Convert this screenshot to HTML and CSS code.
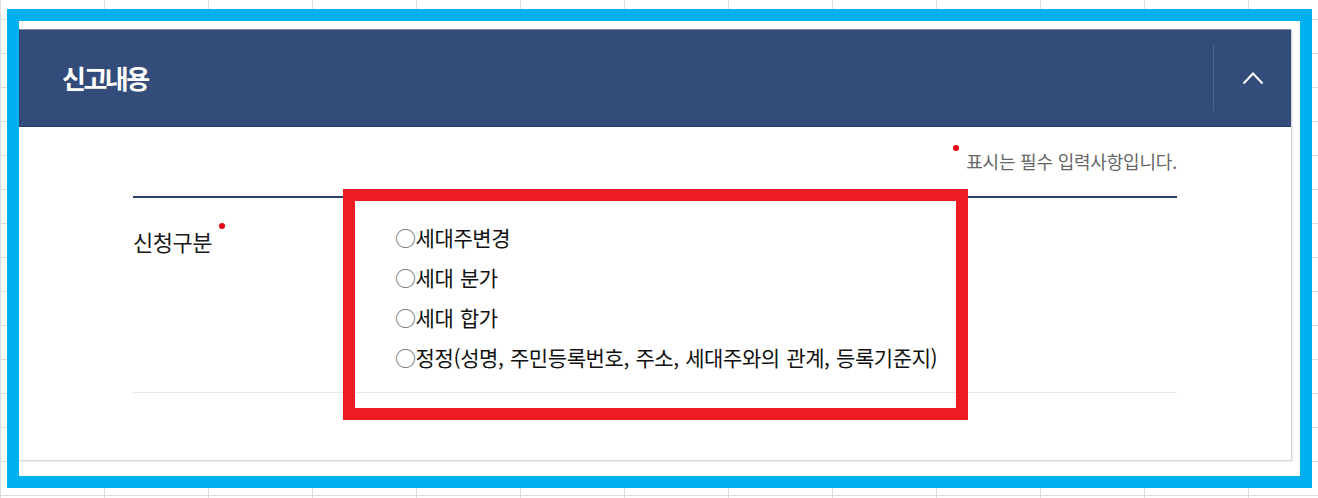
FILE: index.html
```html
<!DOCTYPE html>
<html lang="ko">
<head>
<meta charset="utf-8">
<title>신고내용</title>
<link rel="stylesheet" href="styles.css">
</head>
<body>
<div class="frame">
  <section class="panel">
    <header class="panel-head">
      <h2 class="panel-title">신고내용</h2>
      <button class="toggle" type="button" aria-label="접기">
        <svg width="22" height="14" viewBox="0 0 22 14"><polyline points="1.5,12.5 11,2.5 20.5,12.5" fill="none" stroke="#fff" stroke-width="2"/></svg>
      </button>
    </header>
    <div class="panel-body">
      <p class="note"><span class="dot dot-note"></span>표시는 필수 입력사항입니다.</p>
      <div class="row">
        <div class="label">신청구분<span class="dot dot-label"></span></div>
        <ul class="options">
          <li><span class="mark">○</span>세대주변경</li>
          <li><span class="mark">○</span>세대 분가</li>
          <li><span class="mark">○</span>세대 합가</li>
          <li><span class="mark">○</span>정정(성명, 주민등록번호, 주소, 세대주와의 관계, 등록기준지)</li>
        </ul>
      </div>
    </div>
  </section>
</div>
<div class="highlight"></div>
</body>
</html>
```
FILE: styles.css
```css
html, body {
  margin: 0;
  padding: 0;
}
body {
  width: 1318px;
  height: 498px;
  overflow: hidden;
  position: relative;
  font-family: "Noto Sans CJK KR", "Noto Sans", sans-serif;
  color: #222;
  background-color: #fff;
  background-image:
    repeating-linear-gradient(to right, #dcdcdc 0 1px, transparent 1px 104px),
    repeating-linear-gradient(to bottom, #dcdcdc 0 1px, transparent 1px 34px);
  background-position: 0 0, 0 19px;
}
.frame {
  margin: 9px 0 0 7px;
  width: 1281px;
  height: 455px;
  border: 12px solid #00b0f0;
  background: #fff;
  box-sizing: content-box;
}
.panel {
  margin-top: 8px;
  width: 1272px;
  height: 431px;
  border-right: 1px solid #d8d8d8;
  border-bottom: 1px solid #d8d8d8;
  box-shadow: 1px 1px 1px rgba(0,0,0,0.06);
  display: flex;
  flex-direction: column;
}
.panel-head {
  background: #344c7a;
  border-top: 1px solid #7f8fb0;
  border-bottom: 1px solid #283d68;
  border-left: 1px solid #2b416e;
  display: flex;
  align-items: center;
  justify-content: space-between;
  box-sizing: border-box;
  flex: none;
  height: 98px;
}
.panel-title {
  margin: 0 0 0 42px;
  color: #fff;
  font-size: 26px;
  font-weight: 700;
  letter-spacing: -2.5px;
  line-height: 1;
}
.toggle {
  width: 78px;
  height: 66px;
  margin: 0;
  padding: 0;
  border: 0;
  border-left: 1px solid #4d6391;
  background: transparent;
  display: flex;
  align-items: center;
  justify-content: center;
}
.panel-body {
  padding: 0 114px;
  flex: 1;
}
.note {
  margin: 22px 0 0;
  text-align: right;
  font-size: 18px;
  line-height: 24px;
  color: #666;
  letter-spacing: -0.2px;
}
.dot {
  display: inline-block;
  width: 6px;
  height: 6px;
  border-radius: 50%;
  background: #e60012;
  vertical-align: top;
}
.dot-note {
  margin: -4px 7px 0 0;
}
.dot-label {
  margin: 2px 0 0 7px;
}
.row {
  margin-top: 23px;
  border-top: 2px solid #2c3f6b;
  border-bottom: 1px solid #e8e8e8;
  display: grid;
  grid-template-columns: 262px 1fr;
  padding: 19px 0 15px;
}
.label {
  font-size: 22px;
  font-weight: 400;
  letter-spacing: -0.5px;
  line-height: 40px;
  padding-top: 4px;
  color: #1a1a1a;
}
.options {
  list-style: none;
  margin: 0;
  padding: 0;
  font-size: 21px;
  font-weight: 400;
  letter-spacing: -0.4px;
  word-spacing: 1px;
  line-height: 40px;
  color: #111;
}
.mark {
  color: #666;
}
.highlight {
  position: absolute;
  left: 343px;
  top: 189px;
  width: 601px;
  height: 207px;
  border: 12px solid #ed1c24;
}
```
